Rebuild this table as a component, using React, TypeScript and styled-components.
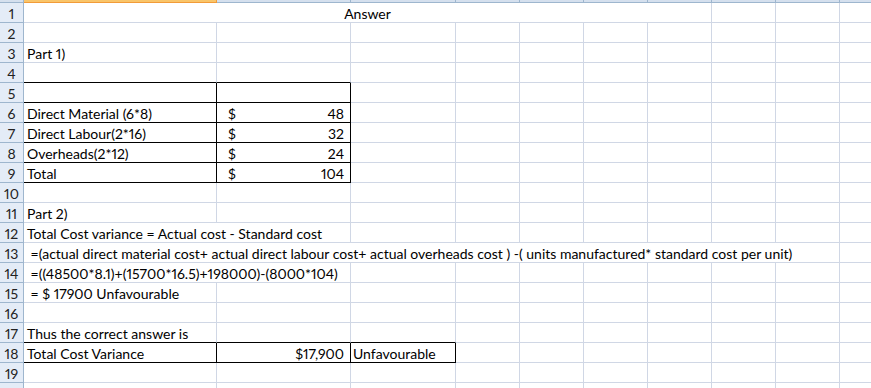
import React from "react";
import styled, { createGlobalStyle } from "styled-components";

const GlobalStyle = createGlobalStyle`
  html, body {
    margin: 0;
    padding: 0;
    background: #ffffff;
    overflow: hidden;
  }
  body {
    font-family: Lato, "Liberation Sans", Arial, sans-serif;
    font-variant-numeric: proportional-nums;
  }
`;

const GRID = "#d0d7e5";
const HEAD_LINE = "#9eb6ce";
const BOX = "#000000";

// Column widths (including each column's right gridline): row header, then A..J
const COL_WIDTHS = [24, 193, 134, 105, 64, 64, 64, 64, 64, 64, 64];
const DATA_COLS = COL_WIDTHS.length - 1;
const ROW_COUNT = 20;

const Sheet = styled.div`
  display: grid;
  grid-template-columns: ${COL_WIDTHS.map((w) => `${w}px`).join(" ")};
  grid-template-rows: 3px repeat(${ROW_COUNT}, 20px);
  width: ${COL_WIDTHS.reduce((a, b) => a + b, 0)}px;
  font-size: 14px;
  color: #000;
`;

const HeaderStrip = styled.div<{ $active?: boolean }>`
  box-sizing: border-box;
  background: ${(p) => (p.$active ? "#f9c56a" : "#d5e0ee")};
  border-bottom: 1px solid ${(p) => (p.$active ? "#f29b38" : HEAD_LINE)};
  border-right: 1px solid ${(p) => (p.$active ? "#f29b38" : HEAD_LINE)};
`;

const RowNumber = styled.div`
  box-sizing: border-box;
  background: #e4ecf7;
  border-right: 1px solid ${HEAD_LINE};
  border-bottom: 1px solid ${HEAD_LINE};
  color: #222;
  display: flex;
  align-items: flex-end;
  justify-content: center;
  line-height: 17px;
`;

const Cell = styled.div<{
  $span: number;
  $right: string;
  $bottom: string;
  $align: "left" | "right" | "center";
  $pad: number;
}>`
  box-sizing: border-box;
  grid-column: span ${(p) => p.$span};
  border-right: 1px solid ${(p) => p.$right};
  border-bottom: 1px solid ${(p) => p.$bottom};
  display: flex;
  align-items: flex-end;
  justify-content: ${(p) =>
    p.$align === "right" ? "flex-end" : p.$align === "center" ? "center" : "flex-start"};
  padding: 0 ${(p) => (p.$align === "right" ? p.$pad : 0)}px 0
    ${(p) => (p.$align === "left" ? p.$pad : 0)}px;
  line-height: 17px;
  white-space: pre;
  overflow: hidden;
`;

const Accounting = styled.div`
  flex: 1;
  display: flex;
  justify-content: space-between;
  padding: 0 6px 0 8px;
`;

type CellDef = {
  text?: string;
  span?: number;
  align?: "left" | "right" | "center";
  pad?: number;
  money?: string;
};

// Cells that carry a thin black outline: A5:B9 and A18:C18
const boxed = (r: number, c: number) =>
  (r >= 5 && r <= 9 && c >= 0 && c <= 1) || (r === 18 && c >= 0 && c <= 2);

const rows: Record<number, CellDef[]> = {
  1: [{ text: "Answer", span: 7, align: "center" }],
  3: [{ text: "Part 1)" }],
  6: [{ text: "Direct Material (6*8)" }, { money: "48" }],
  7: [{ text: "Direct Labour(2*16)" }, { money: "32" }],
  8: [{ text: "Overheads(2*12)" }, { money: "24" }],
  9: [{ text: "Total" }, { money: "104" }],
  11: [{ text: "Part 2)" }],
  12: [{ text: "Total Cost variance = Actual cost - Standard cost", span: 2 }],
  13: [
    {
      text:
        " =(actual direct material cost+ actual direct labour cost+ actual overheads cost ) -( units manufactured* standard cost per unit)",
      span: 9,
    },
  ],
  14: [{ text: " =((48500*8.1)+(15700*16.5)+198000)-(8000*104)", span: 2 }],
  15: [{ text: " = $ 17900 Unfavourable" }],
  17: [{ text: "Thus the correct answer is" }],
  18: [
    { text: "Total Cost Variance" },
    { text: "$17,900", align: "right", pad: 6 },
    { text: "Unfavourable", pad: 2 },
  ],
};

// Only rows 1-19 are fully on screen; the last row peeks in below them
const VISIBLE_ROWS = 19;

function SheetRow({ r }: { r: number }) {
  const defs = rows[r] ?? [];
  const cells: React.ReactNode[] = [];
  let c = 0;
  let i = 0;
  while (c < DATA_COLS) {
    const d: CellDef = defs[i] ?? {};
    i += 1;
    const span = d.span ?? 1;
    const last = c + span - 1;
    const right = boxed(r, last) || boxed(r, last + 1) ? BOX : GRID;
    let bottomBlack = false;
    for (let k = c; k <= last; k++) {
      if (boxed(r, k) || boxed(r + 1, k)) bottomBlack = true;
    }
    const align = d.align ?? "left";
    cells.push(
      <Cell
        key={c}
        $span={span}
        $right={right}
        $bottom={bottomBlack ? BOX : GRID}
        $align={d.money ? "left" : align}
        $pad={d.pad ?? (align === "center" ? 0 : 3)}
      >
        {d.money ? (
          <Accounting>
            <span>$</span>
            <span>{d.money}</span>
          </Accounting>
        ) : (
          d.text ?? ""
        )}
      </Cell>
    );
    c += span;
  }
  return (
    <>
      <RowNumber>{r <= VISIBLE_ROWS ? r : ""}</RowNumber>
      {cells}
    </>
  );
}

export default function App() {
  return (
    <>
      <GlobalStyle />
      <Sheet>
        <HeaderStrip />
        {Array.from({ length: DATA_COLS }, (_, k) => (
          <HeaderStrip key={k} $active={k === 0} />
        ))}
        {Array.from({ length: ROW_COUNT }, (_, k) => (
          <SheetRow key={k + 1} r={k + 1} />
        ))}
      </Sheet>
    </>
  );
}
